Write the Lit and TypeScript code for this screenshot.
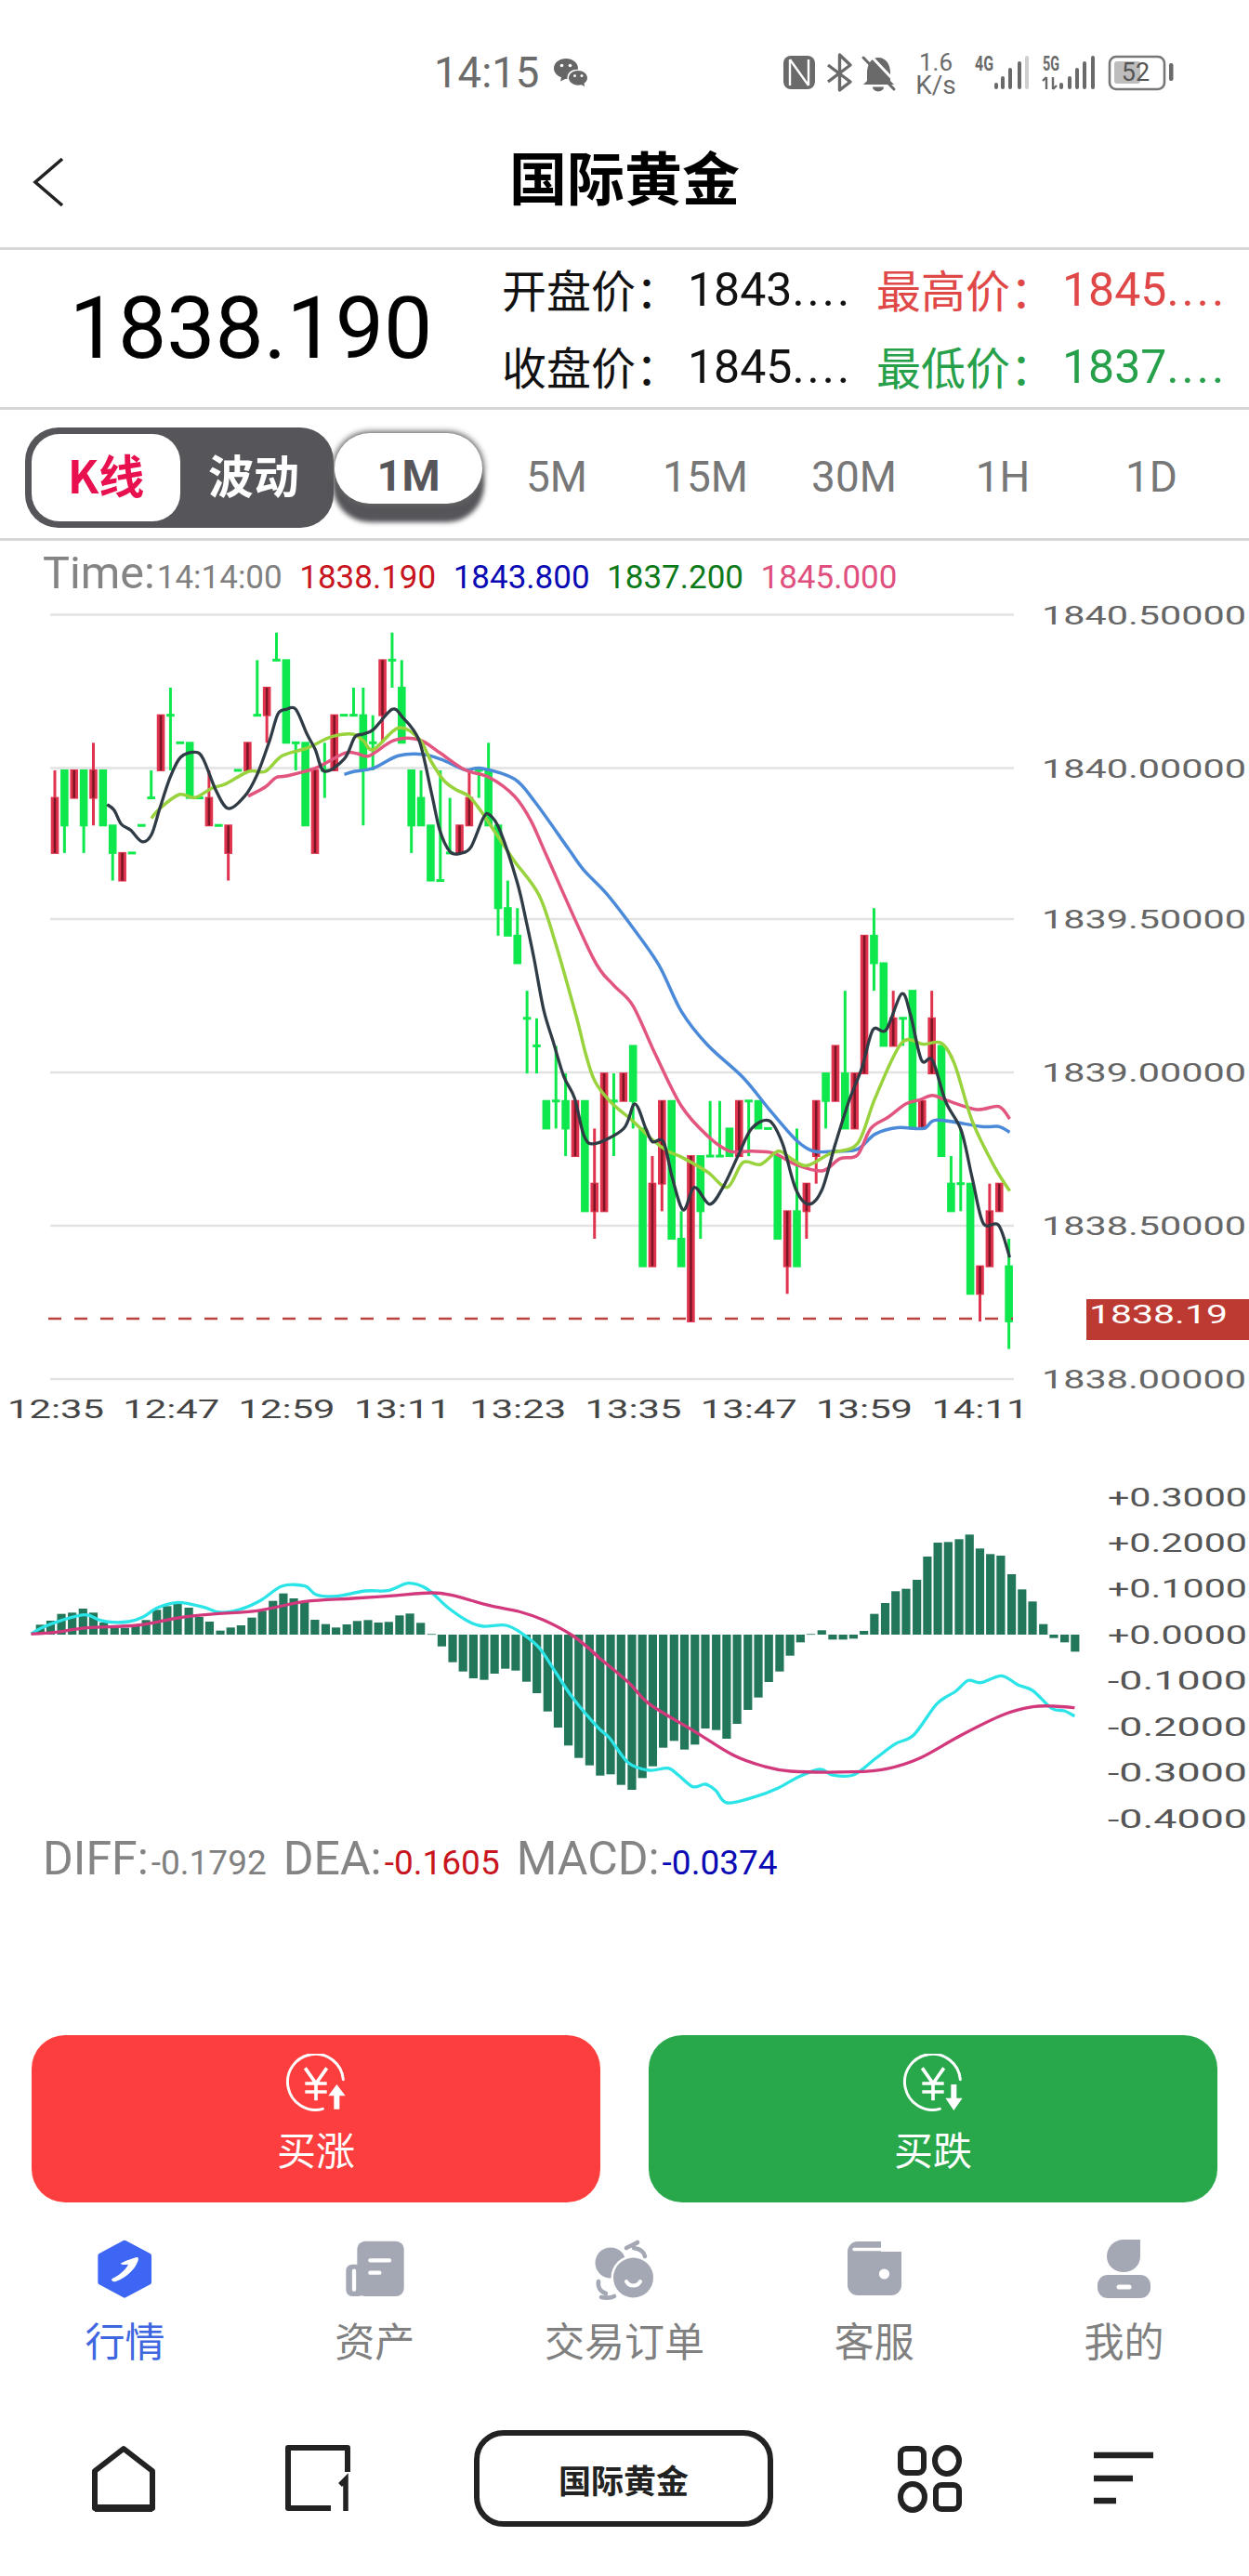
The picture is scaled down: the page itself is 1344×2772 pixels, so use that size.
import { LitElement, html, css, svg } from "lit";
import { customElement } from "lit/decorators.js";

type P = [number, number];
const z2 = (pts: number[][]): P[] => pts.map(([x, y]) => [x / 2.24, 600 + y / 3]);
const c9 = (pts: number[][]): P[] => pts.map(([x, y]) => [520 + x / 3, 950 + y / 3]);
const z3 = (pts: number[][]): P[] => pts.map(([x, y]) => [600 + x / 2.107, 900 + y / 2.45]);
const z4 = (pts: number[][]): P[] => pts.map(([x, y]) => [x / 2.24, 1560 + y / 3]);
const z5 = (pts: number[][]): P[] => pts.map(([x, y]) => [640 + x / 2.227, 1560 + y / 3]);

function smooth(p: P[], k = 0.16): string {
  let d = `M${p[0][0].toFixed(1)} ${p[0][1].toFixed(1)}`;
  for (let i = 0; i < p.length - 1; i++) {
    const a = p[Math.max(0, i - 1)], b = p[i], c = p[i + 1], e = p[Math.min(p.length - 1, i + 2)];
    const c1x = b[0] + (c[0] - a[0]) * k, c1y = b[1] + (c[1] - a[1]) * k;
    const c2x = c[0] - (e[0] - b[0]) * k, c2y = c[1] - (e[1] - b[1]) * k;
    d += `C${c1x.toFixed(1)} ${c1y.toFixed(1)} ${c2x.toFixed(1)} ${c2y.toFixed(1)} ${c[0].toFixed(1)} ${c[1].toFixed(1)}`;
  }
  return d;
}

const lvl = (n: number) => 680.7 + 29.65 * n;
const R = "#e0344e", G = "#0ee84c";
const candles: [number, number, number, number?, number?][] = [
  [1,6,8,5,8],[0,5,7,5,8],[1,5,6],[0,5,7,5,8],[1,5,6,4,7],[0,5,7],[0,7,8,7,9],[1,8,9],[0,8,8],[0,7,7],
  [0,6,6,5,6],[1,3,5],[0,3,3,2,5],[0,4,4],[0,4,6],[0,6,6],[1,6,7,5,7],[0,7,7],[1,7,8,7,9],[0,5,5],
  [1,4,5],[0,3,3,1,3],[1,2,3,2,4],[0,1,1,0,1],[0,1,4],[0,4,4,4,5],[0,4,7],[1,5,8],[0,5,5,4,6],[1,3,5],
  [0,3,3],[0,3,3,2,3],[0,3,5,2,7],[0,4,4,3,5],[1,1,3,1,4],[0,1,1,0,2],[0,2,4,1,4],[0,5,7,5,8],[0,6,7,5,7],[0,7,9],
  [0,9,9,5,9],[0,8,8,6,8],[1,7,8],[1,6,7,5,7],[0,5,5,5,6],[0,5,7,4,7],[0,7,10,7,11],[0,10,11,9,11],[0,11,12,10,12],[0,14,14,13,16],
  [0,15,15,14,16],[0,17,18],[0,17,17,15,18],[0,17,18,16,19],[1,17,19],[0,17,21],[1,20,21,18,22],[1,16,21],[0,17,17,16,19],[1,16,17],
  [0,15,17,15,18],[0,18,23],[1,20,23,19,23],[1,17,20,17,21],[0,17,22],[0,22,23,21,23],[1,19,25],[0,19,21,19,22],[0,19,19,17,19],[0,19,19,17,19],
  [0,18,19],[1,17,19],[0,17,17,17,19],[0,17,18],[0,18,18],[0,19,22],[1,21,23,21,24],[0,21,23,18,23],[1,20,21,20,22],[1,17,19,17,20],
  [0,16,17,16,18],[1,15,17],[0,16,18,13,18],[1,16,18],[1,11,16],[0,11,12,10,13],[0,12,15],[1,14,15,13,15],[0,14,14,14,15],[0,13,18],
  [1,17,18],[1,14,16,13,16],[0,15,19],[0,20,21,19,21],[0,20,20,18,21],[0,20,24],[1,23,24,23,25],[1,21,23,20,23],[1,20,21],[0,23,25,22,26],
];

const black = [
  ...z2([[258,797],[275,815],[292,860],[315,880],[342,917],[365,895],[385,810],[410,710],[435,645],[470,628],[490,650],[520,750],[550,810],[590,770],[620,700],[650,590],[670,505],[690,490],[713,490],[740,570],[760,620],[782,690],[830,650],[855,580],[875,570],[900,555],[945,490],[970,515],[1010,590],[1040,760],[1060,880],[1085,950],[1110,955],[1135,935],[1165,840],[1180,830],[1205,880]]),
  ...c9([[110,0],[140,130],[165,250],[195,410],[225,510],[260,625],[295,695]]),
  ...z3([[60,790],[85,810],[150,770],[175,705],[200,770],[215,805],[240,805],[260,900],[285,985],[310,925],[345,970],[375,925],[410,840],[440,770],[480,750],[510,810],[540,930],[570,970],[600,930],[630,810],[660,700],[690,610],[715,510],[745,510],[780,415],[800,470],[825,590],[850,590],[880,700],[915,775],[940,900],[965,1020],[1000,1025],[1025,1110]]),
];
const lime = [
  ...z2([[365,842],[385,810],[432,765],[470,775],[510,745],[545,730],[600,690],[640,690],[680,640],[740,615],[800,578],[850,570],[875,590],[900,620],[960,550],[1010,585],[1040,660],[1070,720],[1100,750],[1130,770],[1160,820],[1200,900],[1240,980]]),
  ...c9([[180,40],[235,200],[300,430],[330,550],[360,640]]),
  ...z3([[120,700],[170,750],[215,800],[250,830],[280,845],[340,885],[385,925],[420,860],[460,865],[500,830],[530,850],[565,868],[620,835],[680,810],[720,690],[780,545],[830,548],[870,545],[900,600],[940,750],[990,870],[1025,935]]),
];
const pink = [
  ...z2([[598,770],[640,740],[665,710],[690,705],[760,680],[830,632],[860,632],[890,640],[950,590],[1010,588],[1060,630],[1120,685],[1180,710],[1240,770],[1280,850],[1320,970]]),
  ...z3([[80,320],[125,390],[170,445],[220,570],[280,710],[340,790],[390,830],[440,830],[490,835],[540,865],[600,882],[640,850],[680,840],[710,770],[750,740],[790,705],[820,695],[850,683],[880,695],[950,720],[1000,712],[1025,745]]),
];
const blue = [
  ...z2([[830,700],[855,690],[900,680],[960,640],[1020,635],[1070,655],[1120,685],[1160,680],[1240,715],[1290,790],[1370,940]]),
  ...z3([[60,90],[110,150],[170,240],[230,340],[280,460],[340,550],[420,635],[480,720],[540,800],[580,830],[630,830],[680,825],[720,785],[770,768],[830,770],[860,748],[960,765],[1000,765],[1025,780]]),
];

const bars = [
  ...z4([[97,565],[122,552],[148,530],[174,526],[200,513],[225,526],[250,558],[276,570],[301,575],[327,570],[352,550],[378,517],[403,505],[428,497],[455,510],[480,540],[505,555],[531,584],[556,574],[581,567],[607,542],[632,520],[658,488],[683,464],[708,480],[734,492],[759,549],[785,563],[810,574],[836,564],[861,553],[887,550],[912,558],[937,556],[963,535],[988,529],[1014,559],[1040,595],[1065,635],[1091,686],[1116,716],[1141,738],[1167,743],[1192,723],[1218,707],[1243,713],[1269,749],[1294,786],[1320,845],[1345,897],[1370,955],[1395,995],[1421,1019]]),
  ...z5([[13,1052],[38,1048],[63,1082],[89,1098],[114,1060],[139,1022],[164,962],[190,940],[215,968],[240,952],[265,900],[291,905],[316,933],[341,885],[367,840],[392,800],[417,750],[443,716],[468,665],[493,622],[518,595],[544,583],[570,613],[595,613],[620,610],[645,585],[670,530],[696,495],[721,457],[746,449],[772,420],[797,345],[822,300],[847,298],[873,289],[898,274],[923,319],[948,337],[973,342],[999,402],[1024,451],[1049,490],[1075,563],[1100,608],[1126,622],[1151,652]]),
];
const cyan = [
  ...z4([[75,595],[100,575],[150,550],[205,533],[240,550],[270,557],[310,555],[345,540],[380,510],[430,493],[490,508],[530,525],[580,515],[630,485],[680,440],[735,440],[762,468],[810,473],[880,456],[935,455],[985,431],[1030,450],[1080,510],[1130,555],[1165,570],[1220,567],[1260,595],[1300,640],[1340,720],[1380,800],[1440,895]]),
  ...z5([[35,930],[80,1010],[130,1035],[175,1028],[200,1050],[235,1088],[265,1080],[290,1100],[317,1140],[385,1120],[440,1092],[490,1055],[540,1032],[570,1050],[620,1050],[670,1000],[720,950],[765,920],[820,820],[865,780],[895,745],[925,752],[975,730],[1015,760],[1050,778],[1095,835],[1125,843],[1150,860]]),
];
const dea = [
  ...z4([[75,595],[130,590],[210,575],[330,567],[430,543],[520,530],[620,520],[735,490],[850,480],[940,472],[1040,462],[1090,470],[1180,503],[1250,522],[1310,550],[1380,600],[1440,665]]),
  ...z5([[0,660],[80,750],[130,820],[240,910],[330,985],[400,1020],[470,1038],[620,1040],[700,1030],[780,995],[880,920],[980,855],[1050,830],[1100,828],[1150,833]]),
];

const gridYs = [661.5, 826.5, 989, 1154, 1319, 1484];
const priceLabels = ["1840.50000", "1840.00000", "1839.50000", "1839.00000", "1838.50000", "1838.00000"];
const times = ["12:35", "12:47", "12:59", "13:11", "13:23", "13:35", "13:47", "13:59", "14:11"];
const macdLabels = ["+0.3000", "+0.2000", "+0.1000", "+0.0000", "-0.1000", "-0.2000", "-0.3000", "-0.4000"];
const macdYs = [1610.7, 1660, 1709, 1759, 1808, 1858, 1907, 1957];

const FONT = "Roboto, 'Noto Sans CJK SC', sans-serif";

@customElement("app-root")
export class AppRoot extends LitElement {
  static styles = css`
    :host { display: block; width: 1344px; height: 2772px; background: #fff; overflow: hidden;
      font-family: Roboto, "Noto Sans CJK SC", sans-serif; color: #000; }
    svg { display: block; }
    .status { height: 135px; display: flex; align-items: flex-start; padding: 56px 79px 0 467px; box-sizing: border-box; }
    .clock { font-size: 45.5px; line-height: 46px; font-weight: 400; color: #6b6b6b; }
    .wechat { margin: 7px 0 0 16px; }
    .sys { margin: -12px 0 0 auto; }
    .top { height: 131px; display: grid; grid-template-columns: 100px 1fr 100px; align-items: center; padding-bottom: 24px; box-sizing: border-box; }
    .back { margin: 15px 0 0 34px; }
    .title { text-align: center; font-size: 62px; line-height: 70px; font-weight: 700; color: #000; font-family: "Noto Sans CJK SC", sans-serif; }
    .rule { height: 3px; background: #d6d6d6; }
    .info { height: 169px; display: flex; align-items: center; }
    .price { width: 540px; text-align: center; font-size: 93px; line-height: 100px; color: #000; }
    .stats { display: grid; grid-template-columns: 403px 1fr; grid-auto-rows: 83px; align-items: center; }
    .stat { display: flex; align-items: center; font-size: 50px; line-height: 60px; white-space: nowrap; color: #111; }
    .stat b { font-size: 48px; font-weight: 400; width: 200px; margin-top: -4px; font-family: "Noto Sans CJK SC", sans-serif; }
    .stat i { font-style: normal; letter-spacing: 3px; }
    .up { color: #e04848; }
    .down { color: #27a04a; }
    .tabs { height: 138px; display: flex; padding: 19px 0 0 27px; box-sizing: border-box; }
    .mode { width: 332px; height: 108px; box-sizing: border-box; padding: 7px; background: #55555a; border-radius: 36px; display: flex; font-weight: 700; font-size: 49px; font-family: "Noto Sans CJK SC", sans-serif; }
    .mode span { flex: 1; display: flex; align-items: center; justify-content: center; color: #fff; padding-bottom: 10px; box-sizing: border-box; }
    .mode .on { flex: none; width: 160px; background: #fff; border-radius: 30px; color: #e8104f; }
    .tf { width: 160px; height: 64px; margin-top: 6px; padding-top: 15px; line-height: 64px; text-align: center; font-size: 46px; color: #777; }
    .tf.on { background: #fff; color: #55555a; font-weight: 700; font-size: 47px; border-radius: 38px; box-shadow: 0 0 6px 2px #666, 0 18px 5px 2px #55555a; margin-left: 1px; width: 159px; padding-top: 14px; height: 62px; }
    .legend { height: 68px; box-sizing: border-box; padding: 10px 0 0 46px; display: flex; align-items: baseline; font-size: 35px; line-height: 50px; color: #808080; }
    .legend .big { font-size: 48.500px; font-weight: 400; color: #848484; margin-right: 2px; }
    .legend span { margin-right: 18.500px; }
    .red { color: #c8141c; }
    .navy { color: #0a0ab4; }
    .forest { color: #0d7a1a; }
    .rose { color: #e0507e; }
    .mlegend { height: 215px; box-sizing: border-box; padding: 0 0 0 46px; display: flex; align-items: baseline; font-size: 37px; line-height: 50px; color: #808080; }
    .mlegend .big { font-size: 50px; font-weight: 400; color: #848484; margin-right: 3px; }
    .mlegend .val { margin-right: 18px; }
    .actions { height: 180px; display: grid; grid-template-columns: 612px 612px; column-gap: 52px; padding-left: 34px; }
    .btn { border-radius: 36px; display: flex; flex-direction: column; align-items: center; padding-top: 20px; box-sizing: border-box; color: #fff; font-size: 42px; line-height: 50px; font-family: "Noto Sans CJK SC", sans-serif; }
    .btn span { margin-top: 13px; }
    .btn.buy { background: #fd3e3e; }
    .btn.sell { background: #28a84b; }
    .nav { height: 230px; display: grid; grid-template-columns: repeat(5, 1fr); box-sizing: border-box; padding-top: 35px; }
    .item { display: flex; flex-direction: column; align-items: center; color: #808080; font-size: 43px; line-height: 50px; font-family: "Noto Sans CJK SC", sans-serif; }
    .item span { margin-top: 11px; }
    .item.on { color: #3d66e0; }
    .bar { height: 172px; display: grid; grid-template-columns: 266px 152px 506px 152px 268px; justify-items: center; align-items: start; padding-top: 15px; box-sizing: border-box; }
    .ico { margin-top: 13px; }
    .fund { width: 322px; height: 104px; box-sizing: border-box; border: 6.500px solid #222; border-radius: 32px; display: flex; align-items: center; justify-content: center; font-size: 35px; font-weight: 700; color: #222; font-family: "Noto Sans CJK SC", sans-serif; }
  `;

  private statusIcons() {
    const g = "#6a6a6a";
    const sig = (xs: number[], light: boolean) => xs.map((x, i) => svg`<line x1=${x} x2=${x} y1=${[91, 84, 75, 68, 62][i]} y2="94" stroke=${light && i === 4 ? "#cfcfcf" : g} stroke-width="4" stroke-linecap="round"/>`);
    return html`<svg class="sys" width="425" height="70" viewBox="840 44 425 70">
      <rect x="843" y="60" width="34" height="36" rx="8" fill=${g}/>
      <path d="M850 64V92M850 64L870 92M870 64V92" fill="none" stroke="#fff" stroke-width="2.400"/>
      <path d="M891 70L915 88L903.500 97V59L915 70L891 88" fill="none" stroke=${g} stroke-width="3.400" stroke-linejoin="round"/>
      <path d="M945 62C954 62 958 70 958 78V87L962 91H929L933 87V78C933 70 937 62 945 62Z" fill=${g}/>
      <path d="M939 93.500A6 5 0 0 0 951 93.500Z" fill=${g}/>
      <path d="M932 60L966 96" stroke="#fff" stroke-width="3" transform="translate(3,-2)"/>
      <path d="M929 62L962 96" stroke=${g} stroke-width="3" stroke-linecap="round"/>
      <text x="1007" y="76" text-anchor="middle" font-size="26" fill=${g} font-family=${FONT}>1.6</text>
      <text x="1007" y="101" text-anchor="middle" font-size="28" fill=${g} font-family=${FONT}>K/s</text>
      <text x="1049" y="76" font-size="22" font-weight="700" fill=${g} font-family=${FONT} textLength="20" lengthAdjust="spacingAndGlyphs">4G</text>
      ${sig([1072, 1079, 1087, 1097, 1105], true)}
      <text x="1122" y="76" font-size="22" font-weight="700" fill=${g} font-family=${FONT} textLength="18" lengthAdjust="spacingAndGlyphs">5G</text>
      <path d="M1126 96V83M1122 87L1126 83M1133 83V96M1133 96L1137 92" fill="none" stroke=${g} stroke-width="2.400"/>
      ${sig([1142, 1151, 1159, 1167, 1176], false)}
      <rect x="1194" y="61" width="59" height="35" rx="7" fill="none" stroke="#777" stroke-width="2.600"/>
      <rect x="1199" y="66" width="28" height="24" rx="3" fill="#bdbdbd"/>
      <text x="1222" y="87" text-anchor="middle" font-size="27" fill="#555" font-family=${FONT}>52</text>
      <rect x="1258" y="68" width="4.500" height="19" rx="2" fill=${g}/>
    </svg>`;
  }

  private kChart() {
    const w = 10.37;
    return html`<svg width="1344" height="890" viewBox="0 650 1344 890">
      ${gridYs.map((y) => svg`<line x1="54" x2="1091" y1=${y} y2=${y} stroke="#e2e2e2" stroke-width="2.600"/>`)}
      ${candles.map(([c, t, b, wt, wb], i) => {
        const x = 59 + i * w;
        const col = c ? R : G;
        const top = lvl(t), bot = lvl(b);
        const wickT = lvl(wt ?? t), wickB = lvl(wb ?? b);
        const doji = t === b;
        return svg`
          <line x1=${x} x2=${x} y1=${wickT} y2=${wickB} stroke=${col} stroke-width="3"/>
          <rect x=${x - 4.3} y=${doji ? top - 1.5 : top - 1} width="8.600" height=${doji ? 3 : bot - top + 2} fill=${col}/>
          ${c && !doji ? svg`<line x1=${x} x2=${x} y1=${top} y2=${bot} stroke="#7d1526" stroke-width="2.600"/>` : ""}`;
      })}
      <path d=${smooth(blue)} fill="none" stroke="#4a8ad8" stroke-width="3.500"/>
      <path d=${smooth(pink)} fill="none" stroke="#e2557f" stroke-width="3.500"/>
      <path d=${smooth(lime)} fill="none" stroke="#98d23c" stroke-width="3.500"/>
      <path d=${smooth(black)} fill="none" stroke="#2f3b45" stroke-width="3.300"/>
      <line x1="52" x2="1090" y1="1419" y2="1419" stroke="#b8403f" stroke-width="2.400" stroke-dasharray="14 14"/>
      ${priceLabels.map((t, i) => svg`<text x="1121" y=${gridYs[i] + 10} font-size="28" fill="#666" font-family=${FONT} textLength="220" lengthAdjust="spacingAndGlyphs">${t}</text>`)}
      <rect x="1169" y="1398" width="175" height="44" fill="#bd3a32"/>
      <text x="1172" y="1424" font-size="28" fill="#fff" font-family=${FONT} textLength="149" lengthAdjust="spacingAndGlyphs">1838.19</text>
      ${times.map((t, i) => svg`<text x=${8 + i * 124.3} y="1526" font-size="28" fill="#444" font-family=${FONT} textLength="104" lengthAdjust="spacingAndGlyphs">${t}</text>`)}
    </svg>`;
  }

  private macd() {
    const zero = 1759;
    return html`<svg width="1344" height="435" viewBox="0 1540 1344 435">
      ${bars.map(([x, y]) => svg`<rect x=${x - 4.6} y=${Math.min(y, zero)} width="9.200" height=${Math.max(Math.abs(zero - y), 0.8)} fill="#22775a"/>`)}
      <path d=${smooth(cyan)} fill="none" stroke="#2be4e8" stroke-width="3.300"/>
      <path d=${smooth(dea)} fill="none" stroke="#d2397c" stroke-width="3.300"/>
      ${macdLabels.map((t, i) => svg`<text x="1192" y=${macdYs[i] + 10} font-size="28" fill="#555" font-family=${FONT} textLength="150" lengthAdjust="spacingAndGlyphs">${t}</text>`)}
    </svg>`;
  }

  private yuan(up: boolean) {
    return html`<svg width="74" height="64" viewBox="39 29 222 192">
      <path d="M238 112A90 90 0 1 0 172 207" fill="none" stroke="#fff" stroke-width="9" stroke-linecap="round"/>
      <path d="M115 75L150 125L185 75M150 125V180M115 125H185M115 152H185" fill="none" stroke="#fff" stroke-width="11"/>
      ${up
        ? svg`<path d="M217 128L190 165H208V208H226V165H245Z" fill="#fff"/>`
        : svg`<path d="M217 212L190 172H208V128H226V172H245Z" fill="#fff"/>`}
    </svg>`;
  }

  private navIcons() {
    const g = "#a4a8b4";
    return [
      html`<svg width="80" height="76" viewBox="13 30 240 228">
        <path d="M133 55L212 97V183L133 225L55 183V97Z" fill="#3d66f5" stroke="#3d66f5" stroke-width="16" stroke-linejoin="round"/>
        <path d="M92 172C115 160 135 145 145 125C135 125 125 128 120 122C140 112 160 105 172 102C180 102 178 110 176 115C165 145 135 170 105 180C95 183 90 178 92 172Z" fill="#fff"/>
      </svg>`,
      html`<svg width="80" height="76" viewBox="820 30 240 228">
        <rect x="884" y="50" width="151" height="178" rx="26" fill=${g}/>
        <rect x="848" y="125" width="60" height="103" rx="20" fill=${g}/>
        <path d="M926 112H988M926 152H956M874 146V206" fill="none" stroke="#fff" stroke-width="13" stroke-linecap="round"/>
      </svg>`,
      html`<svg width="80" height="76" viewBox="2 10 80 76">
        <circle cx="27" cy="40" r="16.500" fill=${g}/>
        <circle cx="51.500" cy="56" r="24" fill="#fff"/>
        <circle cx="51.500" cy="56" r="21.500" fill=${g}/>
        <path d="M44 60C47 66 56 66 59 60" fill="none" stroke="#fff" stroke-width="4" stroke-linecap="round"/>
        <path d="M44 24C49 21 53 20 56 18M52 24C59 25 63 28 64 33" fill="none" stroke=${g} stroke-width="4.600" stroke-linecap="round"/>
        <path d="M14 60C13 66 16 71 22 73M17 77C22 78 27 78 31 76" fill="none" stroke=${g} stroke-width="4.600" stroke-linecap="round"/>
      </svg>`,
      html`<svg width="80" height="76" viewBox="271 10 80 76">
        <rect x="282" y="17" width="58" height="58" rx="11" fill=${g}/>
        <rect x="318" y="15" width="24" height="13" fill="#fff"/>
        <path d="M289 25.500H342" stroke="#fff" stroke-width="3.400" stroke-linecap="round"/>
        <circle cx="321.500" cy="52" r="5.600" fill="#fff"/>
      </svg>`,
      html`<svg width="80" height="76" viewBox="540 10 80 76">
        <path d="M597 15V33C597 43 589 50 579 50C569 50 561 43 561 33C561 23 569 15 579 15Z" fill=${g}/>
        <rect x="551" y="53" width="57" height="25" rx="11" fill=${g}/>
        <path d="M574 66H585" stroke="#fff" stroke-width="5" stroke-linecap="round"/>
      </svg>`,
    ];
  }

  render() {
    const labels = ["行情", "资产", "交易订单", "客服", "我的"];
    const icons = this.navIcons();
    return html`
      <div class="status">
        <span class="clock">14:15</span>
        <svg class="wechat" width="36" height="30" viewBox="0 0 36 30">
          <path d="M13 0C20 0 26 4.500 26 10.500C26 11 26 11.400 25.900 11.900C20 11.500 14.500 15 14.500 20.500C14.500 21 14.500 21.400 14.600 21.800C13.800 21.900 13 22 12.200 21.900L7 24.500L8 20.300C3.300 18.500 0 15 0 10.500C0 4.500 6 0 13 0Z" fill="#666"/>
          <path d="M26 13C31.500 13 36 16.500 36 20.800C36 23.300 34.500 25.300 32.500 26.800L33.200 30L29.500 28.200C28.300 28.500 27.200 28.700 26 28.700C20.500 28.700 16 25.200 16 20.800C16 16.500 20.500 13 26 13Z" fill="#666"/>
          <circle cx="8.500" cy="7.500" r="1.800" fill="#fff"/><circle cx="17.500" cy="7.500" r="1.800" fill="#fff"/>
          <circle cx="22.500" cy="18.500" r="1.500" fill="#fff"/><circle cx="30" cy="18.500" r="1.500" fill="#fff"/>
        </svg>
        ${this.statusIcons()}
      </div>
      <div class="top">
        <svg class="back" width="36" height="54" viewBox="0 0 36 54">
          <path d="M33 2L4 27L33 52" fill="none" stroke="#222" stroke-width="3.600"/>
        </svg>
        <div class="title">国际黄金</div>
        <div></div>
      </div>
      <div class="rule"></div>
      <div class="info">
        <div class="price">1838.190</div>
        <div class="stats">
          <div class="stat"><b>开盘价：</b><span>1843<i>....</i></span></div>
          <div class="stat up"><b>最高价：</b><span>1845<i>....</i></span></div>
          <div class="stat"><b>收盘价：</b><span>1845<i>....</i></span></div>
          <div class="stat down"><b>最低价：</b><span>1837<i>....</i></span></div>
        </div>
      </div>
      <div class="rule"></div>
      <div class="tabs">
        <div class="mode"><span class="on">K线</span><span>波动</span></div>
        <div class="tf on">1M</div>
        <div class="tf">5M</div>
        <div class="tf">15M</div>
        <div class="tf">30M</div>
        <div class="tf">1H</div>
        <div class="tf">1D</div>
      </div>
      <div class="rule"></div>
      <div class="legend">
        <span class="big">Time:</span><span>14:14:00</span>
        <span class="red">1838.190</span><span class="navy">1843.800</span><span class="forest">1837.200</span><span class="rose">1845.000</span>
      </div>
      ${this.kChart()}
      ${this.macd()}
      <div class="mlegend">
        <span class="big">DIFF:</span><span class="val">-0.1792</span>
        <span class="big">DEA:</span><span class="val red">-0.1605</span>
        <span class="big">MACD:</span><span class="val navy">-0.0374</span>
      </div>
      <div class="actions">
        <div class="btn buy">${this.yuan(true)}<span>买涨</span></div>
        <div class="btn sell">${this.yuan(false)}<span>买跌</span></div>
      </div>
      <div class="nav">
        ${labels.map((l, i) => html`<div class="item ${i === 0 ? "on" : ""}">${icons[i]}<span>${l}</span></div>`)}
      </div>
      <div class="bar">
        <svg class="ico" width="76" height="76" viewBox="95 2628 76 76">
          <path d="M133 2635L164 2659V2699H102V2659Z" fill="none" stroke="#222" stroke-width="6" stroke-linejoin="round"/>
          <path d="M102 2699H164" stroke="#222" stroke-width="8"/>
        </svg>
        <svg class="ico" width="76" height="76" viewBox="304 2628 76 76">
          <path d="M374 2660V2634H310V2699H356" fill="none" stroke="#222" stroke-width="6" stroke-linejoin="round"/>
          <path d="M372 2702V2668L366 2674" fill="none" stroke="#222" stroke-width="5.500"/>
        </svg>
        <div class="fund">国际黄金</div>
        <svg class="ico" width="76" height="76" viewBox="962 2628 76 76">
          <g fill="none" stroke="#222" stroke-width="6">
            <rect x="969" y="2635" width="25" height="26" rx="6"/>
            <ellipse cx="1019" cy="2648" rx="13" ry="14"/>
            <ellipse cx="982" cy="2687" rx="13" ry="14"/>
            <rect x="1007" y="2674" width="25" height="26" rx="6"/>
          </g>
        </svg>
        <svg class="ico" width="76" height="76" viewBox="1172 2628 76 76">
          <path d="M1177 2642H1241M1177 2667H1219M1177 2691H1201" stroke="#222" stroke-width="6.500"/>
        </svg>
      </div>
    `;
  }
}
